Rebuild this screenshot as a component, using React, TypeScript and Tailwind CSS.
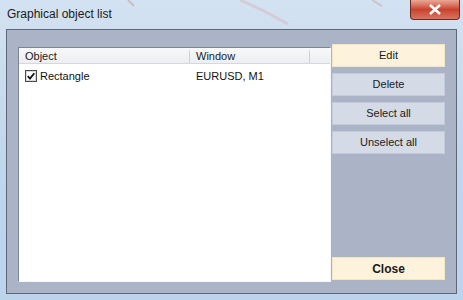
import React from "react";

const font = { fontFamily: '"Liberation Sans", Arial, sans-serif' };

function CheckBox() {
  return (
    <svg width="12" height="12" viewBox="0 0 12 12" className="shrink-0">
      <rect x="0.5" y="0.5" width="11" height="11" fill="#ffffff" stroke="#4a4a4a" />
      <rect x="1.5" y="1.5" width="9" height="9" fill="none" stroke="#d8d8d8" />
      <path d="M2.8 6.2 L5 8.6 L9.3 3.2" fill="none" stroke="#111" strokeWidth="1.8" />
    </svg>
  );
}

function SideButton({
  label,
  active,
  bold,
}: {
  label: string;
  active?: boolean;
  bold?: boolean;
}) {
  return (
    <button
      className={
        active
          ? "h-[23px] w-[113px] border border-[#f3e6c4] bg-[#fdf3dc] text-[11px] text-[#1a1a1a]"
          : "h-[23px] w-[113px] border border-[#c3cbd8] bg-[#d4dbe6] text-[11px] text-[#1a1a1a]"
      }
      style={bold ? { ...font, fontWeight: 700, fontSize: 12 } : font}
    >
      {label}
    </button>
  );
}

export default function App() {
  return (
    <div
      className="relative h-[300px] w-[463px] overflow-hidden bg-gradient-to-b from-[#d3e2f1] via-[#c2d6ec] to-[#bcd3ec]"
      style={font}
    >
      {/* chart lines behind the glass */}
      <svg className="absolute left-0 top-0" width="463" height="30">
        <path d="M128 0 L134 6" stroke="#c9a4a8" strokeWidth="2" opacity="0.6" />
        <path d="M240 0 L262 10 L288 24" stroke="#d7b7bd" strokeWidth="3" opacity="0.5" />
        <path d="M372 0 L382 6" stroke="#c9a4a8" strokeWidth="2" opacity="0.5" />
      </svg>

      {/* title bar */}
      <div className="relative flex h-[29px] items-start pl-[7px] pt-[5px]">
        <span className="text-[12px] text-[#1a1a1a]">Graphical object list</span>
        <div className="absolute right-[3px] top-0 flex h-[20px] w-[50px] items-center justify-center rounded-b-[4px] border border-t-0 border-[#6b2a23] bg-gradient-to-b from-[#eaa797] via-[#c8432d] to-[#d9745f]">
          <svg width="14" height="11" viewBox="0 0 14 11">
            <path d="M2 1 L12 10 M12 1 L2 10" stroke="#ffffff" strokeWidth="2.6" />
          </svg>
        </div>
      </div>

      {/* client area */}
      <div className="mx-[6px] flex h-[265px] w-[451px] border border-[#5c6878] bg-[#aab4c6] pl-[11px] pt-[17px]">
        {/* list */}
        <div className="flex h-[235px] w-[313px] flex-col border border-b-[#f4f6f9] border-l-[#7d8592] border-r-[#f4f6f9] border-t-[#7d8592] bg-white">
          <div className="flex h-[16px] border-b border-[#d5d8dd] bg-gradient-to-b from-[#f8f8f9] to-[#eceef1] pt-[2px] text-[11px] text-[#1a1a1a]">
            <div className="flex w-[171px] items-center border-r border-[#cfd2d7] pl-[6px]">Object</div>
            <div className="flex w-[120px] items-center border-r border-[#cfd2d7] pl-[6px]">Window</div>
            <div className="flex-1" />
          </div>
          <div className="flex h-[24px] items-center text-[11px] text-[#111]">
            <div className="flex w-[171px] items-center gap-[3px] pl-[6px]">
              <CheckBox />
              <span>Rectangle</span>
            </div>
            <div className="pl-[6px]">EURUSD, M1</div>
          </div>
        </div>

        {/* buttons */}
        <div className="ml-[1px] mt-[-3px] flex h-[236px] flex-col">
          <div className="flex flex-col gap-[6px]">
            <SideButton label="Edit" active />
            <SideButton label="Delete" />
            <SideButton label="Select all" />
            <SideButton label="Unselect all" />
          </div>
          <div className="mt-auto">
            <SideButton label="Close" active bold />
          </div>
        </div>
      </div>
    </div>
  );
}
